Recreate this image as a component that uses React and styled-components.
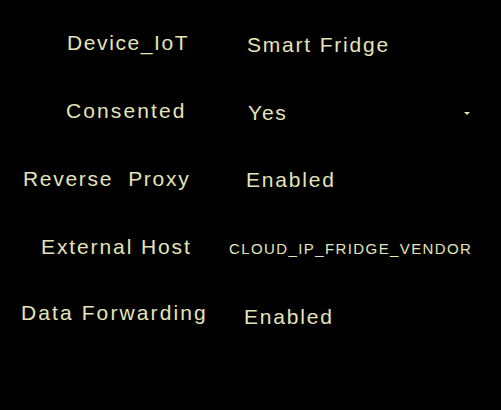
import { createGlobalStyle, styled } from "styled-components";

const GlobalStyle = createGlobalStyle`
    html, body {
        margin: 0;
        background: #000;
    }
    body {
        font-family: "Liberation Sans", Arial, sans-serif;
        color: #e4e4b8;
    }
`;

const Panel = styled.div`
    width: 501px;
    height: 410px;
    padding-top: 9px;
    box-sizing: border-box;
    display: flex;
    flex-direction: column;
`;

const Row = styled.div`
    display: flex;
    align-items: center;
    height: 68px;
`;

const Label = styled.div`
    width: 225px;
    flex: 0 0 225px;
    box-sizing: border-box;
    padding-left: ${(p) => p.$indent}px;
    margin-top: ${(p) => p.$shift || 0}px;
    font-size: 21px;
    letter-spacing: ${(p) => p.$spacing ?? 1.8}px;
    white-space: pre;
`;

const Value = styled.div`
    padding-left: ${(p) => p.$indent}px;
    margin-top: ${(p) => p.$shift || 0}px;
    font-size: ${(p) => (p.$small ? "15px" : "21px")};
    letter-spacing: ${(p) => (p.$small ? "1.4px" : "1.8px")};
    white-space: pre;
`;

const Select = styled.div`
    display: flex;
    align-items: center;
    justify-content: space-between;
    width: 227px;
    margin-left: 23px;
    margin-top: 4px;
    font-size: 21px;
    letter-spacing: 1.8px;
`;

const Caret = styled.span`
    width: 0;
    height: 0;
    border-left: 3px solid transparent;
    border-right: 3px solid transparent;
    border-top: 3px solid #e4e4b8;
    margin-right: 5px;
`;

const rows = [
    { label: "Device_IoT", indent: 67, spacing: 1.6, value: "Smart Fridge", vIndent: 22, vShift: 4 },
    { label: "Consented", indent: 66, spacing: 2.1, select: "Yes" },
    { label: "Reverse  Proxy", indent: 23, spacing: 1.7, value: "Enabled", vIndent: 21, vShift: 2 },
    { label: "External Host", indent: 41, spacing: 1.9, value: "CLOUD_IP_FRIDGE_VENDOR", vIndent: 4, vShift: 2, small: true },
    { label: "Data Forwarding", indent: 21, spacing: 2.1, shift: -4, value: "Enabled", vIndent: 19, vShift: 4 },
];

function App() {
    return (
        <>
            <GlobalStyle />
            <Panel>
                {rows.map((r) => (
                    <Row key={r.label}>
                        <Label $indent={r.indent} $shift={r.shift} $spacing={r.spacing}>
                            {r.label}
                        </Label>
                        {r.select ? (
                            <Select>
                                <span>{r.select}</span>
                                <Caret />
                            </Select>
                        ) : (
                            <Value $indent={r.vIndent} $shift={r.vShift} $small={r.small}>
                                {r.value}
                            </Value>
                        )}
                    </Row>
                ))}
            </Panel>
        </>
    );
}

export default App;
